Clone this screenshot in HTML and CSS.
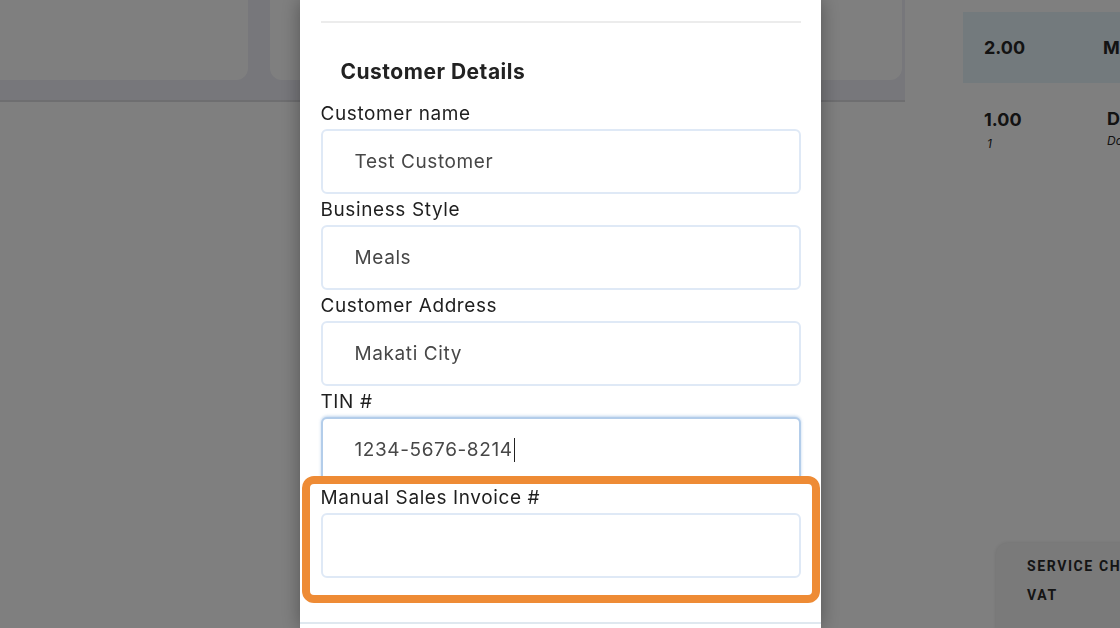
FILE: index.html
```html
<!DOCTYPE html>
<html lang="en">
<head>
    <meta charset="UTF-8">
    <meta name="viewport" content="width=device-width, initial-scale=1.0">
    <title>Customer Details</title>
    <link rel="stylesheet" href="styles.css">
</head>
<body>

    <div class="app">
        <main class="main">
            <header class="topbar">
                <div class="stat-card stat-card--narrow"></div>
                <div class="stat-card stat-card--wide"></div>
            </header>
        </main>

        <aside class="order">
            <div class="order-row order-row--active">
                <div class="qty">2.00</div>
                <div class="item">Meals</div>
            </div>
            <div class="order-row">
                <div class="qty">1.00<span class="sub">1</span></div>
                <div class="item item--indent">Donut<span class="sub">Donut</span></div>
            </div>

            <div class="totals-card">
                <div class="totals-label">SERVICE CHARGE</div>
                <div class="totals-label">VAT</div>
            </div>
        </aside>
    </div>

    <div class="backdrop">
        <div class="modal">
            <div class="modal-body">
                <div class="divider"></div>
                <h2 class="section-title">Customer Details</h2>

                <div class="field">
                    <label class="field-label">Customer name</label>
                    <div class="input">Test Customer</div>
                </div>
                <div class="field">
                    <label class="field-label">Business Style</label>
                    <div class="input">Meals</div>
                </div>
                <div class="field">
                    <label class="field-label">Customer Address</label>
                    <div class="input">Makati City</div>
                </div>
                <div class="field">
                    <label class="field-label">TIN #</label>
                    <div class="input input--focus">1234-5676-8214<span class="caret"></span></div>
                </div>
                <!-- highlighted field -->
                <div class="field field--marked">
                    <label class="field-label">Manual Sales Invoice #</label>
                    <div class="input"></div>
                </div>
            </div>
            <div class="modal-footer"></div>
        </div>
    </div>

</body>
</html>
```

FILE: styles.css
```css
* {
    box-sizing: border-box;
}

html, body {
    margin: 0;
    height: 100%;
    overflow: hidden;
}

body {
    font-family: Inter, "Open Sans", sans-serif;
    background: #ffffff;
    color: #222;
}

/* app behind the modal */
.app {
    display: flex;
    height: 100%;
    width: 1300px;
}

.main {
    flex: 0 0 919px;
    margin-left: -14px;
}

.topbar {
    display: flex;
    gap: 22px;
    height: 102px;
    padding: 0 3px 21px 0;
    background: #eeeef6;
    border-bottom: 2px solid #dcdce0;
}

.stat-card {
    height: 80px;
    background: #ffffff;
    border-radius: 0 0 12px 12px;
}

.stat-card--narrow {
    flex: 0 0 262px;
}

.stat-card--wide {
    flex: 1;
}

.order {
    flex: 0 0 380px;
    display: flex;
    flex-direction: column;
    padding: 12px 0 0 58px;
}

.order-row {
    display: flex;
    padding: 25px 21px 20px;
    font-weight: 700;
    font-size: 18px;
    color: #262626;
}

.order-row--active {
    height: 71px;
    align-items: center;
    padding: 0 21px;
    background: #e6f4fa;
}

.qty {
    width: 119px;
    line-height: 24px;
}

.item--indent {
    padding-left: 4px;
}

.sub {
    display: block;
    font-size: 12px;
    font-weight: 400;
    font-style: italic;
    line-height: 24px;
    padding-left: 3px;
}

.item .sub {
    padding-left: 0;
}

.totals-card {
    margin: auto 0 -10px 33px;
    height: 95px;
    padding: 9px 31px;
    background: #f4f4f4;
    border-radius: 12px;
    box-shadow: 0 0 4px rgba(0, 0, 0, 0.12);
}

.totals-label {
    font-family: Roboto, sans-serif;
    font-weight: 700;
    font-size: 14px;
    letter-spacing: 1.6px;
    line-height: 29px;
    color: #2a2a2a;
    white-space: nowrap;
}

/* modal */
.backdrop {
    position: fixed;
    inset: 0;
    display: flex;
    justify-content: center;
    background: rgba(0, 0, 0, 0.5);
}

.modal {
    width: 521px;
    height: 100%;
    display: flex;
    flex-direction: column;
    background: #ffffff;
    box-shadow: 0 0 18px rgba(0, 0, 0, 0.35);
}

.modal-body {
    flex: 1;
    padding: 21px 20px 0 21px;
}

.divider {
    height: 2px;
    background: #ececec;
}

.section-title {
    margin: 34px 0 11px;
    padding-left: 20px;
    font-size: 21px;
    font-weight: 700;
    letter-spacing: 0.5px;
    line-height: 30px;
    color: #222;
}

.field-label {
    display: block;
    font-size: 19px;
    letter-spacing: 0.6px;
    line-height: 31px;
    color: #1f1f1f;
}

.input {
    display: flex;
    align-items: center;
    height: 65px;
    padding-left: 32px;
    border: 2px solid #dfe9f6;
    border-radius: 6px;
    font-size: 19px;
    letter-spacing: 0.6px;
    color: #474747;
    background: #ffffff;
}

.input--focus {
    border: 2px solid #b3cdea;
    box-shadow: 0 -1px 3px rgba(110, 160, 215, 0.45);
}

.caret {
    display: inline-block;
    width: 1px;
    height: 24px;
    margin-left: 1px;
    background: #222;
}

.field--marked {
    position: relative;
    z-index: 0;
}

.field--marked::before {
    content: "";
    position: absolute;
    inset: -6px -19px -25px -19px;
    z-index: -1;
    background: #ffffff;
    border: 8px solid #ee8b35;
    border-radius: 12px;
}

.modal-footer {
    flex: 0 0 6px;
    border-top: 2px solid #dfe8ef;
}
```
